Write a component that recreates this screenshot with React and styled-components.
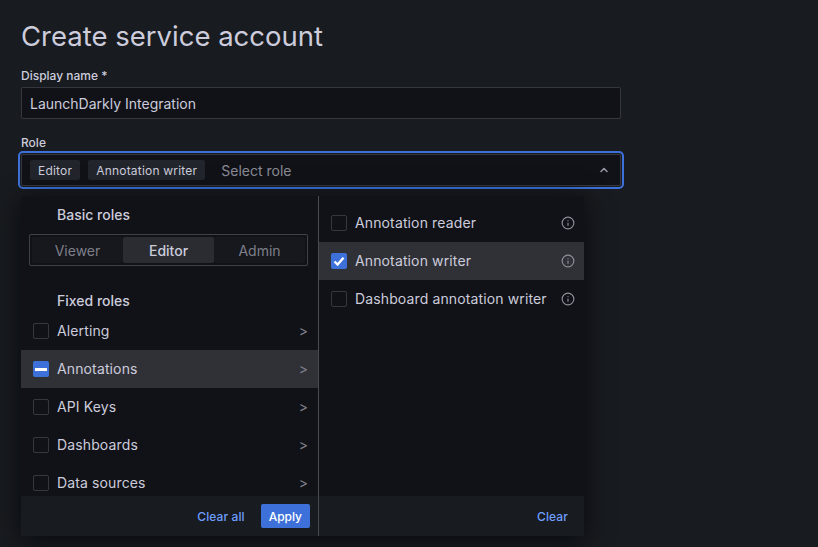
import React from 'react'
import styled, { createGlobalStyle } from 'styled-components'
import { ChevronUp, Info } from 'lucide-react'

const GlobalStyle = createGlobalStyle`
  html, body {
    margin: 0;
    height: 100%;
    background: #181b1f;
    overflow: hidden;
  }
  * {
    box-sizing: border-box;
  }
`

const Page = styled.div`
  width: 818px;
  height: 547px;
  padding: 16px 21px 0;
  font-family: Inter, "Liberation Sans", sans-serif;
  color: #ccccdc;
  overflow: hidden;
`

const Title = styled.h1`
  margin: 0 0 12px;
  font-size: 27.5px;
  line-height: 40px;
  font-weight: 400;
  color: #ccccdc;
`

const Field = styled.div`
  position: relative;
  width: 600px;
  margin-bottom: 16px;
`

const Label = styled.div`
  font-size: 12px;
  line-height: 16px;
  font-weight: 500;
  margin-bottom: 3px;
  color: #ccccdc;
`

const Input = styled.div`
  height: 32px;
  padding: 0 8px;
  display: flex;
  align-items: center;
  background: #111217;
  border: 1px solid rgba(204, 204, 220, 0.2);
  border-radius: 2px;
  font-size: 14px;
`

const Select = styled(Input)`
  outline: 2px solid #3d71d9;
  outline-offset: 1px;
  border-radius: 2px;
  gap: 8px;
  padding-right: 10px;
`

const Tag = styled.span`
  height: 20px;
  padding: 0 8px;
  display: flex;
  align-items: center;
  background: #22252b;
  border-radius: 2px;
  font-size: 12px;
  letter-spacing: 0.2px;
  white-space: nowrap;
`

const Placeholder = styled.span`
  flex: 1;
  margin-left: 8px;
  color: #8a8a96;
`

const Dropdown = styled.div`
  position: absolute;
  top: 61px;
  left: 0;
  width: 563px;
  height: 340px;
  display: grid;
  grid-template-columns: 297px 266px;
  background: #111217;
  box-shadow: 0 4px 24px rgba(1, 4, 9, 0.75);
`

const Column = styled.div`
  display: flex;
  flex-direction: column;
  min-height: 0;
  border-left: ${p => (p.$divided ? '1px solid rgba(204, 204, 220, 0.3)' : 'none')};
`

const Scroll = styled.div`
  flex: 1;
  min-height: 0;
  overflow: hidden;
  padding-top: ${p => p.$top}px;
`

const GroupHeader = styled.div`
  padding-left: 36px;
  font-size: 14px;
  line-height: 20px;
  font-weight: 500;
  margin-bottom: ${p => p.$mb}px;
`

const Segmented = styled.div`
  margin: 0 10px 25px 8px;
  height: 32px;
  padding: 2px;
  display: grid;
  grid-template-columns: repeat(3, 1fr);
  border: 1px solid rgba(204, 204, 220, 0.25);
  border-radius: 2px;
  background: #111217;
`

const Segment = styled.div`
  display: flex;
  align-items: center;
  justify-content: center;
  font-size: 14px;
  border-radius: 2px;
  font-weight: ${p => (p.$active ? 500 : 400)};
  color: ${p => (p.$active ? '#ccccdc' : '#7e7e8a')};
  background: ${p => (p.$active ? '#2a2c32' : '#16181d')};
`

const Row = styled.div`
  height: 38px;
  flex-shrink: 0;
  padding: 0 9px 0 12px;
  display: flex;
  align-items: center;
  gap: 8px;
  font-size: 14px;
  background: ${p => (p.$active ? '#303137' : 'transparent')};
`

const RowText = styled.span`
  flex: 1;
  padding-bottom: 2px;
  letter-spacing: 0.13px;
  white-space: nowrap;
`

const Box = styled.span`
  width: 16px;
  height: 16px;
  flex-shrink: 0;
  display: flex;
  align-items: center;
  justify-content: center;
  border-radius: 2px;
  border: ${p => (p.$on ? 'none' : '1px solid rgba(204, 204, 220, 0.2)')};
  background: ${p => (p.$on ? '#3d71d9' : 'transparent')};
`

const Dash = styled.span`
  width: 12px;
  height: 3px;
  background: #fff;
`

const Caret = styled.span`
  font-size: 14px;
  padding-bottom: 2px;
  color: #7e7e8a;
  margin-right: 1px;
`

const Footer = styled.div`
  height: 40px;
  flex-shrink: 0;
  padding: 8px ${p => p.$right}px 8px 8px;
  display: flex;
  align-items: center;
  justify-content: flex-end;
  gap: 16px;
  background: #181b1f;
`

const TextButton = styled.span`
  font-size: 12px;
  font-weight: 500;
  letter-spacing: 0.1px;
  color: #6e9fff;
`

const Apply = styled.span`
  height: 24px;
  padding: 0 8px;
  display: flex;
  align-items: center;
  background: #3d71d9;
  border-radius: 2px;
  font-size: 12px;
  font-weight: 500;
  color: #fff;
`

const fixedRoles = [
  { name: 'Alerting' },
  { name: 'Annotations', partial: true },
  { name: 'API Keys' },
  { name: 'Dashboards' },
  { name: 'Data sources' },
]

const subRoles = [
  { name: 'Annotation reader' },
  { name: 'Annotation writer', checked: true },
  { name: 'Dashboard annotation writer' },
]

function Check() {
  return (
    <svg width="12" height="12" viewBox="0 0 12 12" fill="none">
      <path d="M1.5 6.5 4.6 9.5 10.5 2.8" stroke="#fff" strokeWidth="2.4" />
    </svg>
  )
}

export default function App() {
  return (
    <Page>
      <GlobalStyle />
      <Title>Create service account</Title>
      <Field>
        <Label>Display name *</Label>
        <Input>LaunchDarkly Integration</Input>
      </Field>
      <Field>
        <Label>Role</Label>
        <Select>
          <Tag>Editor</Tag>
          <Tag>Annotation writer</Tag>
          <Placeholder>Select role</Placeholder>
          <ChevronUp size={12} color="#9a9aa6" strokeWidth={3} />
        </Select>
        <Dropdown>
          <Column>
            <Scroll $top={9}>
              <GroupHeader $mb={9}>Basic roles</GroupHeader>
              <Segmented>
                <Segment>Viewer</Segment>
                <Segment $active>Editor</Segment>
                <Segment>Admin</Segment>
              </Segmented>
              <GroupHeader $mb={1}>Fixed roles</GroupHeader>
              {fixedRoles.map(role => (
                <Row key={role.name} $active={role.partial}>
                  <Box $on={role.partial}>{role.partial && <Dash />}</Box>
                  <RowText>{role.name}</RowText>
                  <Caret>&gt;</Caret>
                </Row>
              ))}
            </Scroll>
            <Footer $right={8}>
              <TextButton>Clear all</TextButton>
              <Apply>Apply</Apply>
            </Footer>
          </Column>
          <Column $divided>
            <Scroll $top={8}>
              {subRoles.map(role => (
                <Row key={role.name} $active={role.checked}>
                  <Box $on={role.checked}>{role.checked && <Check />}</Box>
                  <RowText>{role.name}</RowText>
                  <Info size={14} color="#8e8e9a" />
                </Row>
              ))}
            </Scroll>
            <Footer $right={16}>
              <TextButton>Clear</TextButton>
            </Footer>
          </Column>
        </Dropdown>
      </Field>
    </Page>
  )
}
